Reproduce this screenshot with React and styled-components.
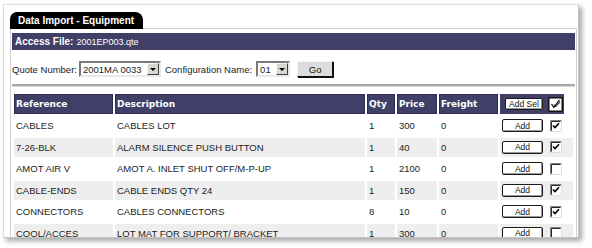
import React from 'react';
import styled, { createGlobalStyle } from 'styled-components';

const NAVY = '#3f3f67';

const Global = createGlobalStyle`
  html, body { margin: 0; padding: 0; background: #fff; }
  body { font-family: "Liberation Sans", Arial, sans-serif; color: #1c1c1c; }
`;

const Page = styled.div`
  width: 592px;
  height: 248px;
  box-sizing: border-box;
  padding: 4px 0 0 3px;
  overflow: hidden;
`;

const Card = styled.div`
  width: 576px;
  height: 234px;
  box-sizing: border-box;
  border: 1px solid #dedede;
  border-right-color: #c4c4c4;
  border-bottom-color: #c4c4c4;
  background: #fff;
  box-shadow: 3px 3px 5px rgba(0, 0, 0, 0.35);
  padding: 5px 1px 0 6px;
  overflow: hidden;
`;

const Tab = styled.div`
  position: relative;
  z-index: 1;
  display: inline-flex;
  align-items: center;
  height: 17px;
  padding: 0 9px 0 8px;
  margin-bottom: -1px;
  background: #000;
  color: #fff;
  font-weight: bold;
  font-size: 10px;
  border-radius: 7px 8px 0 0;
`;

const Panel = styled.div`
  border: 1px solid #d0d0d0;
  border-bottom: none;
  padding: 4px 1px 0 1px;
`;

const AccessBar = styled.div`
  display: flex;
  align-items: center;
  height: 17px;
  padding-left: 3px;
  background: ${NAVY};
  color: #fff;
  font-size: 9px;
  b { font-size: 10px; margin-right: 3px; }
`;

const QuoteRow = styled.div`
  display: flex;
  align-items: center;
  height: 18px;
  margin-top: 10px;
  font-size: 9.5px;
`;

const Label = styled.span`
  margin-right: ${p => p.$gap || 2}px;
  white-space: nowrap;
`;

const Select = styled.div`
  display: flex;
  align-items: stretch;
  box-sizing: border-box;
  width: ${p => p.$w}px;
  height: 16px;
  margin-right: ${p => p.$mr || 0}px;
  border: 2px solid;
  border-color: #7a7a7a #e8e8e8 #e8e8e8 #7a7a7a;
  background: #fff;
  font-size: 9.5px;
`;

const SelectText = styled.span`
  flex: 1;
  display: flex;
  align-items: center;
  padding-left: 2px;
  white-space: nowrap;
`;

const SelectArrow = styled.span`
  width: 12px;
  box-sizing: border-box;
  display: flex;
  align-items: center;
  justify-content: center;
  background: #d8d6d0;
  border: 1px solid;
  border-color: #f4f4f4 #404040 #404040 #f4f4f4;
  &::after {
    content: '';
    border-left: 3px solid transparent;
    border-right: 3px solid transparent;
    border-top: 3px solid #000;
  }
`;

const GoButton = styled.button`
  box-sizing: border-box;
  width: 36px;
  height: 16px;
  padding: 0;
  font-family: "Liberation Sans", Arial, sans-serif;
  font-size: 9.5px;
  color: #111;
  background: #dcdcdc;
  border: 1px solid;
  border-color: #f6f6f6 #111 #111 #f6f6f6;
  box-shadow: 1px 1px 0 #111;
`;

const Rule = styled.div`
  height: 0;
  margin-top: 6px;
  border-top: 2px solid #a8a8a8;
  border-bottom: 1px solid #dadada;
`;

const Table = styled.table`
  width: 563px;
  margin-top: 5px;
  table-layout: fixed;
  border-collapse: separate;
  border-spacing: 2px;
`;

const Th = styled.th`
  height: 20px;
  box-sizing: border-box;
  padding: 0 2px;
  text-align: left;
  font-family: "DejaVu Sans", Verdana, sans-serif;
  font-weight: bold;
  font-size: 9px;
  color: #fff;
  background: ${NAVY};
  box-shadow: inset 0 0 0 1px #2d2d52;
  white-space: nowrap;
`;

const ActionTh = styled(Th)`
  padding: 0 0 0 5px;
  background: linear-gradient(to right, ${NAVY} 64px, #fff 64px);
  box-shadow: none;
`;

const Td = styled.td`
  height: 19.5px;
  padding: 0 2px;
  font-size: 9.5px;
  color: #1c1c1c;
  white-space: nowrap;
  overflow: hidden;
  background: ${p => (p.$alt ? '#eeeeee' : '#fff')};
`;

const ActionCell = styled(Td)`
  padding: 0 0 0 2px;
`;

const Actions = styled.div`
  display: flex;
  align-items: center;
  gap: ${p => p.$gap}px;
`;

const AddButton = styled.button`
  box-sizing: border-box;
  width: ${p => p.$w}px;
  height: ${p => p.$h}px;
  padding: 0;
  font-family: "Liberation Sans", Arial, sans-serif;
  font-size: 8.5px;
  color: #111;
  background: #fff;
  border: 1.5px solid #1a1a1a;
  border-radius: 2px;
  box-shadow: inset -1px -1px 0 #9a9a9a;
`;

const CheckBox = ({ checked }) => (
  <svg width="12" height="12" viewBox="0 0 12 12">
    <rect x="0" y="0" width="12" height="12" fill="#fff" />
    <path d="M0.5 11.5V0.5H11.5" fill="none" stroke="#7d7d7d" />
    <path d="M1.5 10.5V1.5H10.5" fill="none" stroke="#2a2a2a" />
    <path d="M0.5 11.5H11.5V0.5" fill="none" stroke="#dcdcdc" />
    {checked && (
      <path d="M3 5.5L5 7.6L9 3.3" fill="none" stroke="#000" strokeWidth="1.6" />
    )}
  </svg>
);

const HeaderCheck = () => (
  <svg width="15" height="15" viewBox="0 0 15 15">
    <rect x="0.75" y="0.75" width="13.5" height="13.5" fill="#fff" stroke="#111" strokeWidth="1.5" rx="1" />
    <path d="M3.5 7L5.8 10.5L11.5 3" fill="none" stroke="#111" strokeWidth="1.3" />
    <path d="M6 7.5L7.6 10L12 5" fill="none" stroke="#111" strokeWidth="1" />
  </svg>
);

const rows = [
  ['CABLES', 'CABLES LOT', '1', '300', '0', true],
  ['7-26-BLK', 'ALARM SILENCE PUSH BUTTON', '1', '40', '0', true],
  ['AMOT AIR V', 'AMOT A. INLET SHUT OFF/M-P-UP', '1', '2100', '0', false],
  ['CABLE-ENDS', 'CABLE ENDS QTY 24', '1', '150', '0', true],
  ['CONNECTORS', 'CABLES CONNECTORS', '8', '10', '0', true],
  ['COOL/ACCES', 'LOT MAT FOR SUPPORT/ BRACKET', '1', '300', '0', false],
];

export default function App() {
  return (
    <>
      <Global />
      <Page>
        <Card>
          <Tab>Data Import - Equipment</Tab>
          <Panel>
            <AccessBar>
              <b>Access File:</b>
              <span>2001EP003.qte</span>
            </AccessBar>
            <QuoteRow>
              <Label $gap={2}>Quote Number:</Label>
              <Select $w={82} $mr={4}>
                <SelectText>2001MA 0033</SelectText>
                <SelectArrow />
              </Select>
              <Label $gap={4}>Configuration Name:</Label>
              <Select $w={34} $mr={7}>
                <SelectText>01</SelectText>
                <SelectArrow />
              </Select>
              <GoButton>Go</GoButton>
            </QuoteRow>
            <Rule />
            <Table>
              <colgroup>
                <col style={{ width: 99 }} />
                <col style={{ width: 250 }} />
                <col style={{ width: 28 }} />
                <col style={{ width: 40 }} />
                <col style={{ width: 59 }} />
                <col style={{ width: 73 }} />
              </colgroup>
              <thead>
                <tr>
                  <Th>Reference</Th>
                  <Th>Description</Th>
                  <Th>Qty</Th>
                  <Th>Price</Th>
                  <Th>Freight</Th>
                  <ActionTh>
                    <Actions $gap={5}>
                      <AddButton $w={38} $h={12}>Add Sel</AddButton>
                      <HeaderCheck />
                    </Actions>
                  </ActionTh>
                </tr>
              </thead>
              <tbody>
                {rows.map((r, i) => {
                  const alt = i % 2 === 1;
                  return (
                    <tr key={r[0]}>
                      <Td $alt={alt}>{r[0]}</Td>
                      <Td $alt={alt}>{r[1]}</Td>
                      <Td $alt={alt}>{r[2]}</Td>
                      <Td $alt={alt}>{r[3]}</Td>
                      <Td $alt={alt}>{r[4]}</Td>
                      <ActionCell $alt={alt}>
                        <Actions $gap={7}>
                          <AddButton $w={41} $h={13}>Add</AddButton>
                          <CheckBox checked={r[5]} />
                        </Actions>
                      </ActionCell>
                    </tr>
                  );
                })}
              </tbody>
            </Table>
          </Panel>
        </Card>
      </Page>
    </>
  );
}
